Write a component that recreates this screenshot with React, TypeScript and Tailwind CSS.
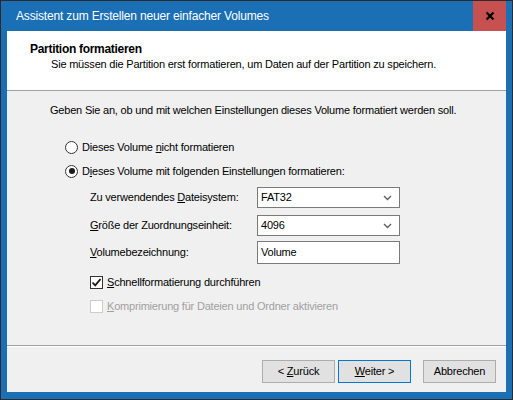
function Chevron() {
  return (
    <svg width="9" height="6" viewBox="0 0 9 6" className="shrink-0">
      <path d="M1 1 L4.5 4.5 L8 1" fill="none" stroke="#606060" strokeWidth="1.4" />
    </svg>
  );
}

function Combo({ value }: { value: string }) {
  return (
    <div className="flex h-[21px] w-[143px] items-center justify-between border border-[#7a7a7a] bg-white pl-[3px] pr-[7px]">
      <span>{value}</span>
      <Chevron />
    </div>
  );
}

function Radio({ checked }: { checked?: boolean }) {
  return (
    <span className="mr-[4px] flex h-[13px] w-[13px] shrink-0 items-center justify-center rounded-full border border-[#333333] bg-white">
      {checked && <span className="h-[6px] w-[6px] rounded-full bg-[#1a1a1a]" />}
    </span>
  );
}

function Check({ checked, disabled }: { checked?: boolean; disabled?: boolean }) {
  return (
    <span
      className={
        "mr-[4px] flex h-[13px] w-[13px] shrink-0 items-center justify-center border bg-white " +
        (disabled ? "border-[#cccccc]" : "border-[#333333]")
      }
    >
      {checked && (
        <svg width="11" height="11" viewBox="0 0 11 11">
          <path d="M1.5 5.5 L4.2 8.3 L9.5 2.2" fill="none" stroke="#1a1a1a" strokeWidth="1.8" />
        </svg>
      )}
    </span>
  );
}

function Button({ children, focused }: { children: React.ReactNode; focused?: boolean }) {
  return (
    <div
      className={
        "flex h-[23px] w-[73px] items-center justify-center border bg-[#e1e1e1] " +
        (focused ? "border-[#0078d7]" : "border-[#adadad]")
      }
    >
      {children}
    </div>
  );
}

export default function App() {
  return (
    <div
      className="flex h-[400px] w-[513px] flex-col border border-[#2b2b2b] bg-[#1a6fb5] text-[11px] tracking-[-0.2px] text-black"
      style={{ fontFamily: '"Liberation Sans", Arial, sans-serif' }}
    >
      {/* title bar */}
      <div className="flex h-[30px] shrink-0 items-center">
        <span className="flex-1 pl-[15px] text-[12px] tracking-[-0.17px] text-white">
          Assistent zum Erstellen neuer einfacher Volumes
        </span>
        <div className="mr-[6px] flex h-[30px] w-[33px] items-center justify-center bg-[#c75050]">
          <svg width="10" height="10" viewBox="0 0 10 10">
            <path d="M1.5 1.5 L8.5 8.5 M8.5 1.5 L1.5 8.5" stroke="#000" strokeWidth="2.2" />
          </svg>
        </div>
      </div>

      <div className="mx-[6px] mb-[7px] flex flex-1 flex-col bg-[#f0f0f0]">
        {/* header */}
        <div className="h-[59px] shrink-0 bg-white pl-[23px] pt-[11px]">
          <div className="text-[12px] font-bold leading-[15px] tracking-[-0.3px]">Partition formatieren</div>
          <div className="pl-[21px] pt-[1px] leading-[13px]">
            Sie müssen die Partition erst formatieren, um Daten auf der Partition zu speichern.
          </div>
        </div>
        <div className="h-px shrink-0 bg-[#a0a0a0]" />

        {/* body */}
        <div className="flex flex-1 flex-col pl-[43px] pt-[13px]">
          <div className="leading-[13px]">
            Geben Sie an, ob und mit welchen Einstellungen dieses Volume formatiert werden soll.
          </div>

          <div className="ml-[15px] mt-[23px] flex h-[14px] items-center">
            <Radio />
            <span>
              Dieses Volume <u>n</u>icht formatieren
            </span>
          </div>
          <div className="ml-[15px] mt-[10px] flex h-[14px] items-center">
            <Radio checked />
            <span>
              D<u>i</u>eses Volume mit folgenden Einstellungen formatieren:
            </span>
          </div>

          <div className="ml-[40px] mt-[9px] flex flex-col">
            <div className="flex items-center">
              <span className="w-[167px]">
                Zu verwendendes <u>D</u>ateisystem:
              </span>
              <Combo value="FAT32" />
            </div>
            <div className="mt-[7px] flex items-center">
              <span className="w-[167px]">
                <u>G</u>röße der Zuordnungseinheit:
              </span>
              <Combo value="4096" />
            </div>
            <div className="mt-[5px] flex items-center">
              <span className="w-[167px]">
                <u>V</u>olumebezeichnung:
              </span>
              <div className="flex h-[23px] w-[143px] items-center border border-[#7a7a7a] bg-white pl-[3px]">
                Volume
              </div>
            </div>

            <div className="mt-[11px] flex h-[14px] items-center">
              <Check checked />
              <span>
                <u>S</u>chnellformatierung durchführen
              </span>
            </div>
            <div className="mt-[10px] flex h-[14px] items-center text-[#a0a0a0]">
              <Check disabled />
              <span>
                <u>K</u>omprimierung für Dateien und Ordner aktivieren
              </span>
            </div>
          </div>
        </div>

        {/* footer */}
        <div className="h-px shrink-0 bg-[#a0a0a0]" />
        <div className="h-px shrink-0 bg-white" />
        <div className="flex h-[45px] shrink-0 justify-end pr-[10px] pt-[13px]">
          <Button>
            <span className="whitespace-pre">{"< "}</span>
            <u>Z</u>urück
          </Button>
          <div className="ml-[3px]">
            <Button focused>
              <u>W</u>eiter
              <span className="whitespace-pre">{" >"}</span>
            </Button>
          </div>
          <div className="ml-[12px]">
            <Button>Abbrechen</Button>
          </div>
        </div>
      </div>
    </div>
  );
}
